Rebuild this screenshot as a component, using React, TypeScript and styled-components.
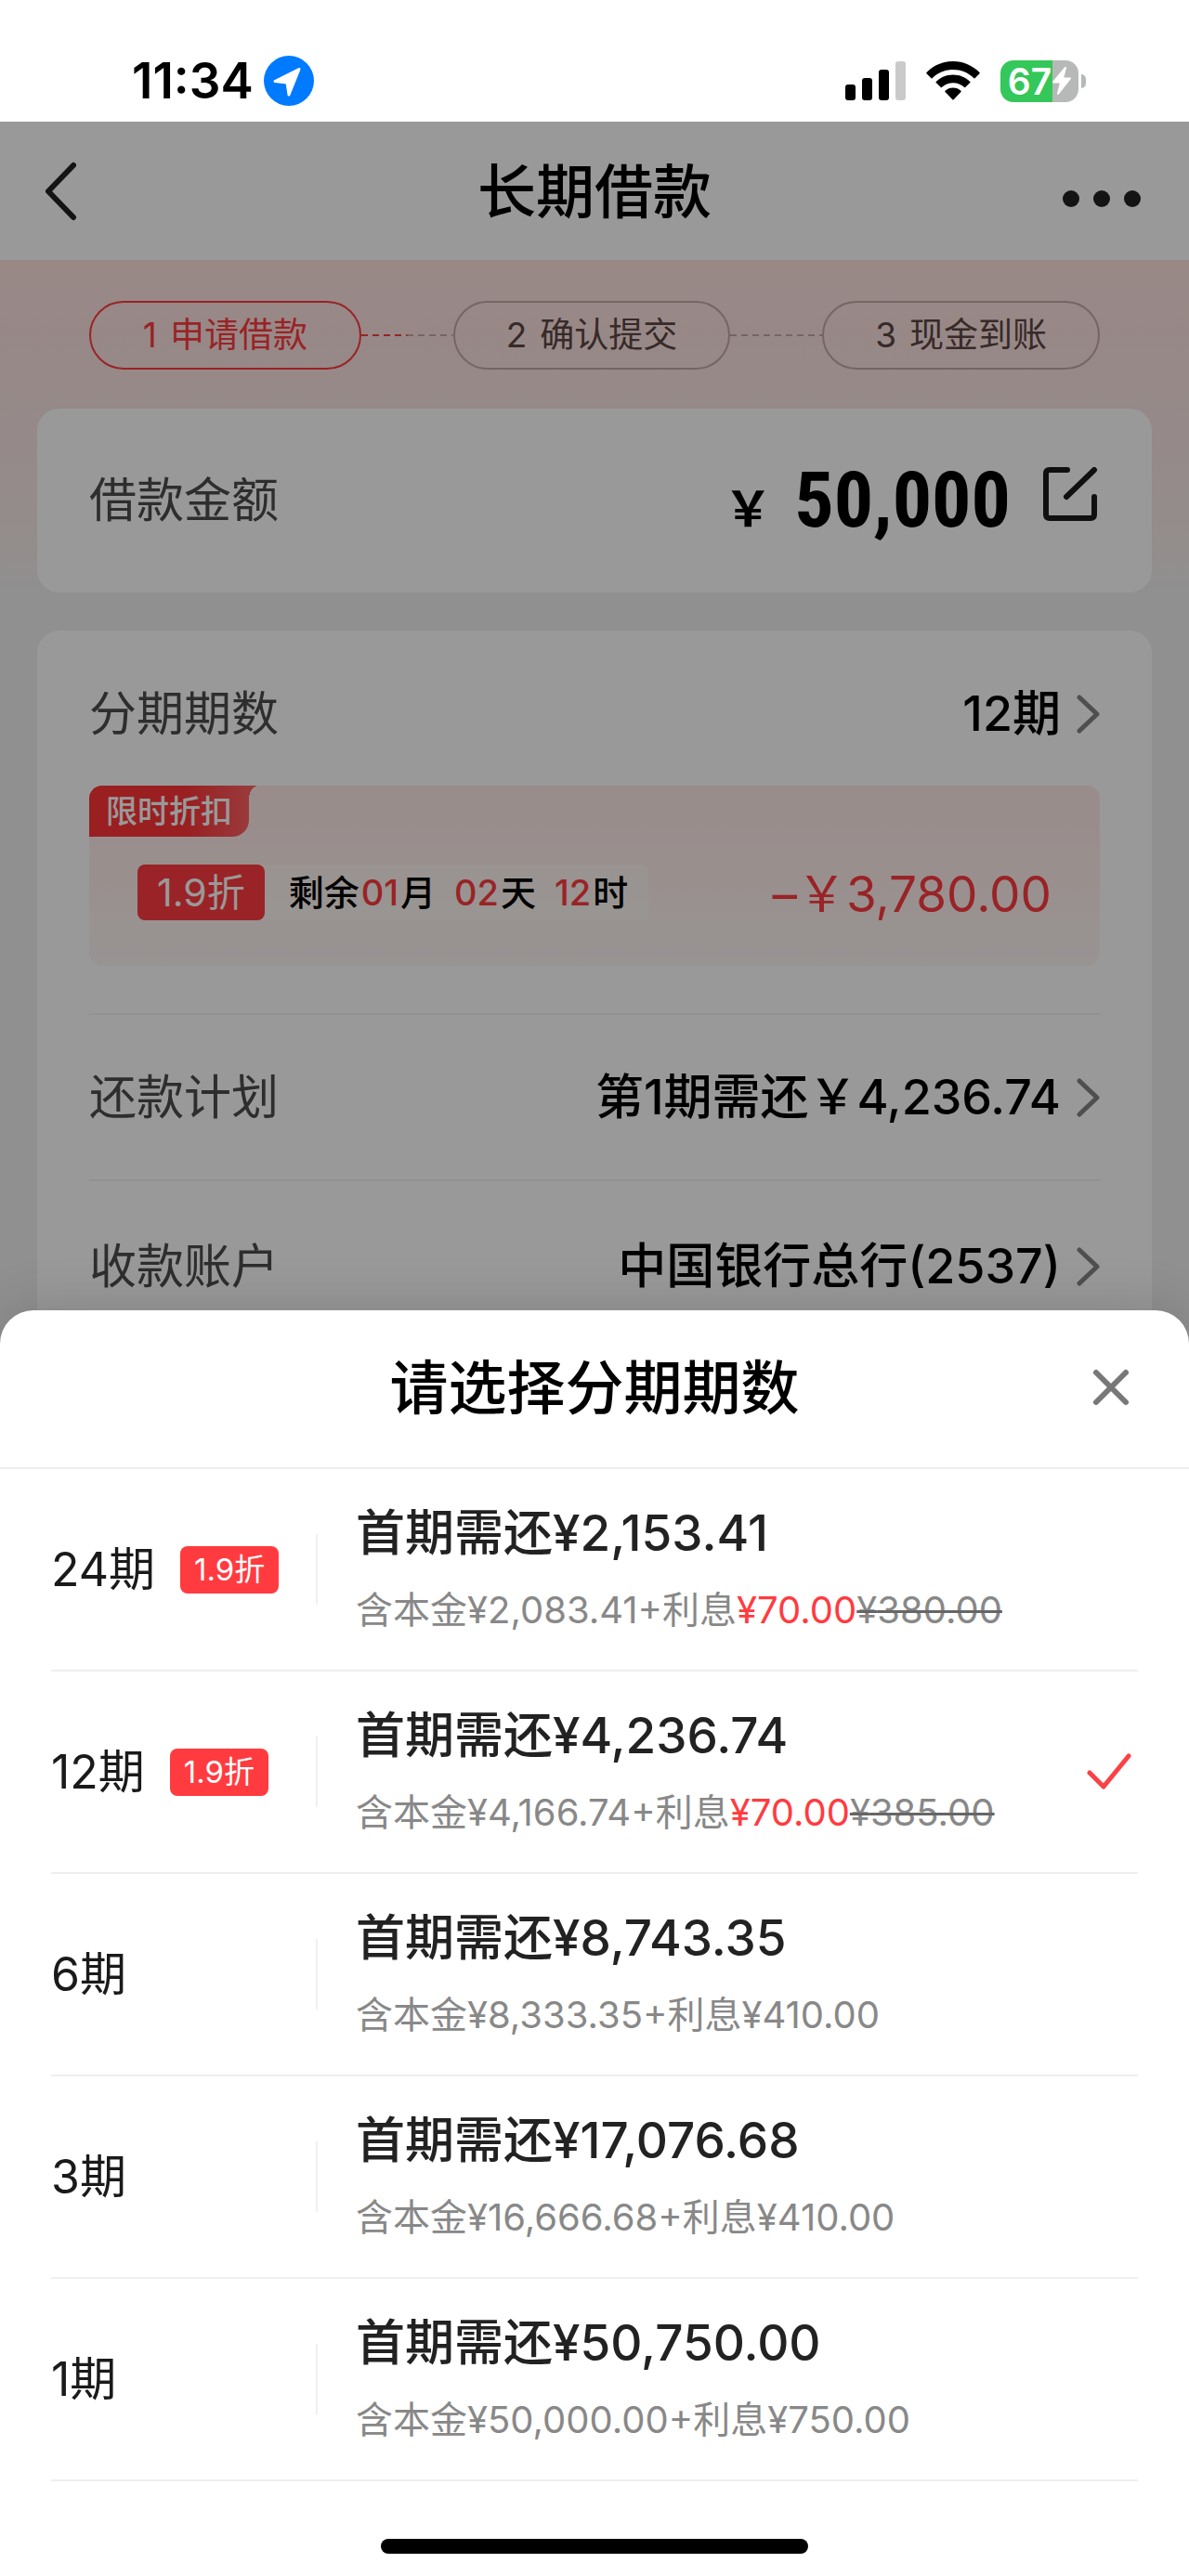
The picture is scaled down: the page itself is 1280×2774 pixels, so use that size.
import React, { useState } from 'react';
import styled, { createGlobalStyle, css } from 'styled-components';

const GlobalStyle = createGlobalStyle`
  * { box-sizing: border-box; }
  html, body { margin: 0; padding: 0; }
  body {
    background: #fff;
    color: #000;
    font-family: Inter, "Noto Sans CJK SC", sans-serif;
    font-weight: 400;
  }
  button {
    border: 0;
    padding: 0;
    background: none;
    color: inherit;
    font: inherit;
    cursor: pointer;
  }
  h1, h2, p, ul, ol { margin: 0; padding: 0; font-weight: inherit; list-style: none; }
  svg { display: block; flex: none; }
`;

const RED = '#ff3b40';

const Screen = styled.div`
  display: flex;
  flex-direction: column;
  min-height: 100vh;
`;

/* ---------- status bar ---------- */

const StatusBar = styled.header`
  display: flex;
  align-items: flex-end;
  justify-content: space-between;
  height: 131px;
  padding: 0 111px 17px 142px;
  background: #fff;
`;

const StatusGroup = styled.div<{ $gap: number }>`
  display: flex;
  align-items: center;
  gap: ${(p) => p.$gap}px;
  height: 54px;
`;

const Clock = styled.span`
  font-size: 53px;
  line-height: 54px;
  font-weight: 600;
`;

const Battery = styled.span`
  display: flex;
  align-items: center;
  gap: 3px;
`;

const BatteryBody = styled.span`
  display: flex;
  align-items: center;
  justify-content: center;
  gap: 1px;
  width: 84px;
  height: 45px;
  border-radius: 14px;
  background: linear-gradient(90deg, #34c759 67%, #b6b9b8 67%);
  color: #fff;
  font-size: 39px;
  line-height: 45px;
  font-weight: 600;
`;

const BatteryTip = styled.span`
  width: 5px;
  height: 15px;
  border-radius: 0 6px 6px 0;
  background: #b6b9b8;
`;

/* ---------- stage: page, dimmer and sheet share one grid cell ---------- */

const Stage = styled.div`
  display: grid;
  grid-template: minmax(0, 1fr) / minmax(0, 1fr);
  flex: 1;
  overflow: hidden;
  background: #f0f0f0;

  > * { grid-area: 1 / 1; }
`;

const Page = styled.main`
  display: flex;
  flex-direction: column;
  align-self: start;
`;

const Dimmer = styled.div`
  z-index: 1;
  background: rgba(0, 0, 0, 0.4);
`;

const NavBar = styled.nav`
  display: grid;
  grid-template-columns: 1fr auto 1fr;
  align-items: center;
  height: 149px;
  padding: 0 48px;
  background: #fff;
`;

const NavTitle = styled.h1`
  font-size: 63px;
  line-height: 80px;
  font-weight: 500;
`;

const IconButton = styled.button<{ $end?: boolean }>`
  display: flex;
  justify-self: ${(p) => (p.$end ? 'end' : 'start')};
`;

const Hero = styled.section`
  display: flex;
  flex-direction: column;
  gap: 42px;
  padding: 44px 40px 0;
  background: linear-gradient(#ffe3e0, #fae4e3 40%, #f6ebe9 85%, #f0f0f0);
`;

const Steps = styled.ol`
  display: flex;
  align-items: center;
  padding: 0 56px;
`;

const Step = styled.li<{ $active?: boolean }>`
  display: flex;
  align-items: center;
  justify-content: center;
  gap: 14px;
  flex: ${(p) => (p.$active ? 292 : 298)} 1 0;
  height: 74px;
  border: 2px solid ${(p) => (p.$active ? RED : '#c4a8a6')};
  border-radius: 37px;
  color: ${(p) => (p.$active ? RED : '#5c4644')};
  font-size: 37px;
  line-height: 44px;
`;

const StepLink = styled.li<{ $half?: boolean }>`
  flex: 100 1 0;
  height: 2px;
  background: repeating-linear-gradient(90deg, #c4a8a6 0 7px, transparent 7px 12px);
  ${(p) =>
    p.$half &&
    css`
      background:
        repeating-linear-gradient(90deg, ${RED} 0 7px, transparent 7px 12px) left / 50% 100% no-repeat,
        repeating-linear-gradient(90deg, #c4a8a6 0 7px, transparent 7px 12px) right / 50% 100% no-repeat;
    `}
`;

const Card = styled.section`
  padding: 0 56px;
  border-radius: 24px;
  background: #fff;
`;

const CardArea = styled.div`
  padding: 41px 40px 40px;
`;

const Row = styled.div<{ $height: number; $line?: boolean; $shift?: boolean }>`
  display: flex;
  align-items: center;
  justify-content: space-between;
  height: ${(p) => p.$height}px;
  padding-top: ${(p) => (p.$shift ? 12 : 0)}px;
  border-top: ${(p) => (p.$line ? '2px solid #f2f2f2' : '0')};
`;

const Label = styled.span`
  color: #4d4d4d;
  font-size: 51px;
  line-height: 64px;
`;

const RowButton = styled.button`
  display: flex;
  align-items: center;
  gap: 16px;
  font-size: 52px;
  line-height: 64px;
  font-weight: 500;
`;

const AmountGroup = styled.div`
  display: flex;
  align-items: center;
  gap: 34px;
  padding-right: 2px;
`;

const Amount = styled.p`
  display: flex;
  align-items: baseline;
  gap: 24px;
  padding-top: 10px;
  font-family: "Roboto Condensed", "Liberation Sans Narrow", Roboto, "Noto Sans CJK SC", sans-serif;
  font-size: 84px;
  line-height: 96px;
  font-weight: 700;
`;

const AmountSign = styled.span`
  font-size: 52px;
`;

const EditButton = styled.button`
  padding-bottom: 12px;
`;

/* ---------- discount strip ---------- */

const Promo = styled.div`
  display: flex;
  flex-direction: column;
  align-items: stretch;
  gap: 30px;
  margin-bottom: 51px;
  padding-bottom: 49px;
  border-radius: 14px;
  background: linear-gradient(#ffe9e8, #fff1ee 60%, #fdf7f4);
`;

const PromoTag = styled.span`
  position: relative;
  align-self: flex-start;
  padding: 0 18px;
  border-radius: 14px 0 18px 0;
  background: linear-gradient(90deg, #ff3438 60%, #ff6064);
  color: #fff;
  font-size: 34px;
  line-height: 55px;
  font-weight: 500;

  &::after {
    content: '';
    position: absolute;
    top: 0;
    left: 100%;
    width: 10px;
    height: 14px;
    background: radial-gradient(ellipse 10px 14px at 100% 100%, transparent 98%, #ff6064);
  }
`;

const PromoRow = styled.div`
  display: flex;
  align-items: center;
  justify-content: space-between;
  height: 60px;
  padding: 0 52px;
`;

const Countdown = styled.div`
  display: flex;
  align-items: center;
  gap: 26px;
  height: 60px;
  padding-right: 22px;
  border-radius: 8px;
  background: rgba(255, 251, 247, 0.6);
  font-size: 38px;
  line-height: 60px;
  font-weight: 500;
`;

const CountdownText = styled.p`
  display: flex;
  gap: 18px;
`;

const Digits = styled.span`
  color: ${RED};
  padding: 0 2px;
`;

const Badge = styled.span<{ $large?: boolean }>`
  display: inline-flex;
  align-items: center;
  justify-content: center;
  height: ${(p) => (p.$large ? 60 : 51)}px;
  padding: 0 ${(p) => (p.$large ? 21 : 15)}px;
  border-radius: 8px;
  background: ${RED};
  color: #fff;
  font-size: ${(p) => (p.$large ? 41 : 33)}px;
  font-weight: 400;
`;

const Saving = styled.strong`
  padding-top: 4px;
  color: ${RED};
  font-size: 53px;
  line-height: 60px;
  font-weight: 400;
`;

/* ---------- bottom sheet ---------- */

const Sheet = styled.section`
  z-index: 2;
  align-self: end;
  display: flex;
  flex-direction: column;
  border-radius: 36px 36px 0 0;
  background: #fff;
  box-shadow: 0 0 60px rgba(0, 0, 0, 0.16);
`;

const SheetHeader = styled.header`
  display: grid;
  grid-template-columns: 1fr auto 1fr;
  align-items: center;
  height: 171px;
  padding: 0 63px 4px;
  border-bottom: 2px solid #efefef;
`;

const SheetTitle = styled.h2`
  grid-column: 2;
  font-size: 63px;
  line-height: 80px;
  font-weight: 500;
`;

const Options = styled.ul`
  padding: 0 55px;
`;

const Option = styled.li`
  border-bottom: 2px solid #efefef;
`;

const OptionLabel = styled.label`
  display: flex;
  align-items: center;
  height: 216px;
  padding-right: 7px;
  cursor: pointer;
`;

const HiddenRadio = styled.input`
  position: absolute;
  width: 1px;
  height: 1px;
  margin: 0;
  opacity: 0;
`;

const Term = styled.span`
  display: flex;
  align-items: center;
  gap: 27px;
  flex: 0 0 287px;
  height: 76px;
  border-right: 2px solid #efefef;
  color: #1a1a1a;
  font-size: 50px;
  line-height: 64px;
`;

const Detail = styled.span`
  display: flex;
  flex-direction: column;
  flex: 1;
  gap: 26px;
  padding-left: 41px;
`;

const Due = styled.span`
  color: #222;
  font-size: 53px;
  line-height: 62px;
  font-weight: 500;
`;

const Breakdown = styled.span`
  color: #888;
  font-size: 40px;
  line-height: 52px;
`;

const Reduced = styled.span`
  color: ${RED};
`;

const Original = styled.s`
  text-decoration: line-through 3px #666;
`;

const HomeArea = styled.footer`
  display: flex;
  justify-content: center;
  padding: 62px 0 24px;
`;

const HomeBar = styled.span`
  width: 36%;
  height: 16px;
  border-radius: 8px;
  background: #000;
`;

/* ---------- icons ---------- */

const LocationIcon = () => (
  <svg width="54" height="54" viewBox="0 0 54 54" aria-hidden="true">
    <circle cx="27" cy="27" r="27" fill="#007aff" />
    <path d="M38 14.500L12 27.500L25 29L27 42Z" fill="#fff" stroke="#fff" strokeWidth="3" strokeLinejoin="round" />
  </svg>
);

const SignalIcon = () => (
  <svg width="65" height="42" viewBox="0 0 65 42" aria-hidden="true">
    <rect x="0" y="25" width="11" height="17" rx="3" />
    <rect x="18" y="18" width="11" height="24" rx="3" />
    <rect x="36" y="9" width="11" height="33" rx="3" />
    <rect x="54" y="0" width="11" height="42" rx="3" fill="#cacaca" />
  </svg>
);

const WifiIcon = () => (
  <svg width="58" height="42" viewBox="0 0 58 42" aria-hidden="true">
    <path d="M29 0C40 0 50 4.500 57.500 12Q58 12.600 57.500 13.200L52.500 18.200Q52 18.600 51.500 18.200C45 12 37.500 9 29 9S13 12 6.500 18.200Q6 18.600 5.500 18.200L.5 13.200Q0 12.600.5 12C8 4.500 18 0 29 0Z" />
    <path d="M29 14.500C36 14.500 42.500 17.200 47.300 22Q47.800 22.500 47.300 23L42.200 28Q41.700 28.500 41.200 28C37.800 25 33.600 23.300 29 23.300S20.200 25 16.800 28Q16.300 28.500 15.800 28L10.700 23Q10.200 22.500 10.700 22C15.500 17.200 22 14.500 29 14.500Z" />
    <path d="M29 28.500C32.400 28.500 35.200 29.700 37.500 31.800Q38 32.400 37.500 33L29.600 41.200Q29 41.700 28.400 41.200L20.500 33Q20 32.400 20.500 31.800C22.800 29.700 25.600 28.500 29 28.500Z" />
  </svg>
);

const BoltIcon = () => (
  <svg width="20" height="30" viewBox="0 0 20 30" aria-hidden="true">
    <path d="M14 1L1 16.500H9L6 29L19 12.500H11Z" fill="#fff" stroke="#fff" strokeWidth="2" strokeLinejoin="round" />
  </svg>
);

const BackIcon = () => (
  <svg width="36" height="64" viewBox="0 0 36 64" fill="none" aria-hidden="true">
    <path d="M31 4L4 32L31 60" stroke="#222" strokeWidth="6" strokeLinecap="round" strokeLinejoin="round" />
  </svg>
);

const MoreIcon = () => (
  <svg width="89" height="34" viewBox="0 0 89 34" fill="#222" aria-hidden="true">
    <circle cx="10" cy="25" r="9" />
    <circle cx="43" cy="25" r="9" />
    <circle cx="76" cy="25" r="9" />
  </svg>
);

const EditIcon = () => (
  <svg width="60" height="60" viewBox="0 0 60 60" fill="none" stroke="#1c1c1c" strokeWidth="6" strokeLinecap="round" strokeLinejoin="round" aria-hidden="true">
    <path d="M27 3H8Q4 3 4 7V51Q4 55 8 55H52Q56 55 56 51V32" />
    <path d="M56 3L26 32" />
  </svg>
);

const ChevronIcon = () => (
  <svg width="26" height="42" viewBox="0 0 26 42" fill="none" aria-hidden="true">
    <path d="M4 3L23 21L4 39" stroke="#848484" strokeWidth="5" strokeLinecap="round" strokeLinejoin="round" />
  </svg>
);

const CloseIcon = () => (
  <svg width="42" height="42" viewBox="0 0 42 42" aria-hidden="true">
    <path d="M5 5L37 37M37 5L5 37" stroke="#787878" strokeWidth="6" strokeLinecap="round" />
  </svg>
);

const CheckIcon = () => (
  <svg width="48" height="40" viewBox="0 0 48 40" fill="none" aria-hidden="true">
    <path d="M3 21L18 36L45 3" stroke="#fb4145" strokeWidth="5" strokeLinecap="round" strokeLinejoin="round" />
  </svg>
);

/* ---------- data ---------- */

/* full-width yen sign, as the loan page sets its amounts */
const YUAN = '\uFFE5';

interface Plan {
  months: number;
  discount?: string;
  due: string;
  principal: string;
  interest: string;
  original?: string;
}

const plans: Plan[] = [
  { months: 24, discount: '1.9折', due: '2,153.41', principal: '2,083.41', interest: '70.00', original: '380.00' },
  { months: 12, discount: '1.9折', due: '4,236.74', principal: '4,166.74', interest: '70.00', original: '385.00' },
  { months: 6, due: '8,743.35', principal: '8,333.35', interest: '410.00' },
  { months: 3, due: '17,076.68', principal: '16,666.68', interest: '410.00' },
  { months: 1, due: '50,750.00', principal: '50,000.00', interest: '750.00' },
];

export default function App() {
  const [months, setMonths] = useState(12);

  return (
    <Screen>
      <GlobalStyle />
      <StatusBar>
        <StatusGroup $gap={11}>
          <Clock>11:34</Clock>
          <LocationIcon />
        </StatusGroup>
        <StatusGroup $gap={22}>
          <SignalIcon />
          <WifiIcon />
          <Battery>
            <BatteryBody>
              67
              <BoltIcon />
            </BatteryBody>
            <BatteryTip />
          </Battery>
        </StatusGroup>
      </StatusBar>

      <Stage>
        <Page>
          <NavBar>
            <IconButton type="button" aria-label="返回">
              <BackIcon />
            </IconButton>
            <NavTitle>长期借款</NavTitle>
            <IconButton type="button" aria-label="更多" $end>
              <MoreIcon />
            </IconButton>
          </NavBar>

          <Hero>
            <Steps>
              <Step $active>
                <span>1</span>
                <span>申请借款</span>
              </Step>
              <StepLink $half aria-hidden="true" />
              <Step>
                <span>2</span>
                <span>确认提交</span>
              </Step>
              <StepLink aria-hidden="true" />
              <Step>
                <span>3</span>
                <span>现金到账</span>
              </Step>
            </Steps>
            <Card>
              <Row $height={198}>
                <Label>借款金额</Label>
                <AmountGroup>
                  <Amount>
                    <AmountSign>{YUAN}</AmountSign>
                    50,000
                  </Amount>
                  <EditButton type="button" aria-label="修改金额">
                    <EditIcon />
                  </EditButton>
                </AmountGroup>
              </Row>
            </Card>
          </Hero>

          <CardArea>
            <Card>
              <Row $height={167} $shift>
                <Label>分期期数</Label>
                <RowButton type="button">
                  {months}期
                  <ChevronIcon />
                </RowButton>
              </Row>
              <Promo>
                <PromoTag>限时折扣</PromoTag>
                <PromoRow>
                  <Countdown>
                    <Badge $large>1.9折</Badge>
                    <CountdownText>
                      <span>剩余<Digits>01</Digits>月</span>
                      <span><Digits>02</Digits>天</span>
                      <span><Digits>12</Digits>时</span>
                    </CountdownText>
                  </Countdown>
                  <Saving>–{YUAN}3,780.00</Saving>
                </PromoRow>
              </Promo>
              <Row $height={179} $line>
                <Label>还款计划</Label>
                <RowButton type="button">
                  第1期需还{YUAN}4,236.74
                  <ChevronIcon />
                </RowButton>
              </Row>
              <Row $height={186} $line>
                <Label>收款账户</Label>
                <RowButton type="button">
                  中国银行总行(2537)
                  <ChevronIcon />
                </RowButton>
              </Row>
            </Card>
          </CardArea>
        </Page>

        <Dimmer />

        <Sheet role="dialog" aria-labelledby="sheet-title">
          <SheetHeader>
            <SheetTitle id="sheet-title">请选择分期期数</SheetTitle>
            <IconButton type="button" aria-label="关闭" $end>
              <CloseIcon />
            </IconButton>
          </SheetHeader>
          <Options>
            {plans.map((plan) => (
              <Option key={plan.months}>
                <OptionLabel>
                  <HiddenRadio
                    type="radio"
                    name="term"
                    checked={months === plan.months}
                    onChange={() => setMonths(plan.months)}
                  />
                  <Term>
                    {plan.months}期
                    {plan.discount && <Badge>{plan.discount}</Badge>}
                  </Term>
                  <Detail>
                    <Due>首期需还¥{plan.due}</Due>
                    <Breakdown>
                      含本金¥{plan.principal}+利息
                      {plan.original ? (
                        <>
                          <Reduced>¥{plan.interest}</Reduced>
                          <Original>¥{plan.original}</Original>
                        </>
                      ) : (
                        <>¥{plan.interest}</>
                      )}
                    </Breakdown>
                  </Detail>
                  {months === plan.months && <CheckIcon />}
                </OptionLabel>
              </Option>
            ))}
          </Options>
          <HomeArea>
            <HomeBar />
          </HomeArea>
        </Sheet>
      </Stage>
    </Screen>
  );
}
